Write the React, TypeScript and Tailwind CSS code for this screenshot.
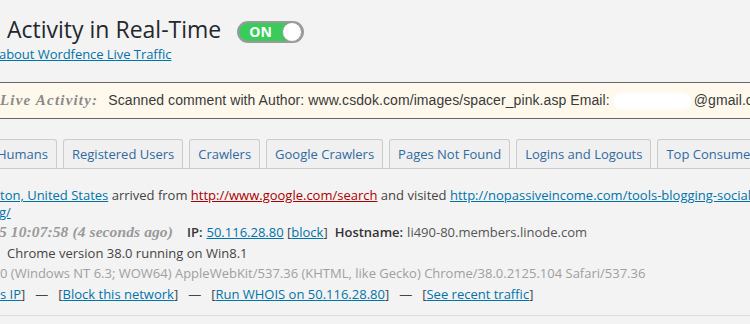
import React from "react";

const serif = "font-['Liberation_Serif',Georgia,serif] font-bold italic";

function Tab({ label, className = "" }: { label: string; className?: string }) {
  return (
    <div
      className={`h-[29px] px-2 border border-b-0 border-[#cccccc] rounded-t-[3px] bg-[#f0f0f0] text-[13px] leading-[28px] text-[#2f6aa1] whitespace-nowrap shrink-0 ${className}`}
    >
      {label}
    </div>
  );
}

function Lnk({ children, className = "" }: { children: React.ReactNode; className?: string }) {
  return <span className={`text-[#0073aa] underline ${className}`}>{children}</span>;
}

function Sep() {
  return <span className="mx-[10px]">—</span>;
}

export default function App() {
  return (
    <div className="w-[750px] h-[324px] overflow-hidden bg-[#f3f3f3] font-['Open_Sans',sans-serif] text-[13px] text-[#444444]">
      {/* Header */}
      <div className="flex items-start pt-[15px]">
        <div className="flex flex-col">
          <div className="pl-[7px] h-[29px] text-[23px] leading-[29px] text-[#23282d] whitespace-nowrap">
            Activity in Real-Time
          </div>
          <div className="mt-[1px] -ml-[1px] leading-[18px] text-[13px] whitespace-nowrap tracking-[-0.05px]">
            <Lnk>about Wordfence Live Traffic</Lnk>
          </div>
        </div>
        <div className="ml-[16px] mt-[6px] relative w-[67px] h-[22px] rounded-full border-2 border-[#9a9a9a] bg-[#3acb5a] flex items-center">
          <span className="pl-[10px] text-[14px] font-bold text-white leading-none">ON</span>
          <span className="absolute right-0 top-1/2 -translate-y-1/2 w-[20px] h-[20px] rounded-full bg-white border border-[#9a9a9a]"></span>
        </div>
      </div>

      {/* Live activity bar */}
      <div className="mt-[19px] h-[37px] border-y border-[#666666] bg-[#fef9ec] flex items-center whitespace-nowrap">
        <span className={`${serif} text-[15px] tracking-[1.2px] text-[#8a8a8a]`}>Live Activity:</span>
        <span className="ml-[10px] font-['Liberation_Sans',Arial,sans-serif] text-[14px] tracking-[0.08px] text-[#3a3a3a] flex items-center">
          Scanned comment with Author: www.csdok.com/images/spacer_pink.asp Email:
          <span className="inline-block w-[78px] h-[16px] mx-[3px] bg-white rounded-full blur-[1px]"></span>
          @gmail.com
        </span>
      </div>

      {/* Tabs */}
      <div className="mt-[20px] flex items-end gap-[6px] border-b border-[#cccccc] overflow-hidden">
        <Tab label="Humans" className="-ml-[12px]" />
        <Tab label="Registered Users" />
        <Tab label="Crawlers" />
        <Tab label="Google Crawlers" />
        <Tab label="Pages Not Found" />
        <Tab label="Logins and Logouts" />
        <Tab label="Top Consumers" />
      </div>

      {/* Entry */}
      <div className="border-b border-[#dddddd] pb-[11px]">
        <div className="mt-[18px] leading-[17px]">
          <div className="whitespace-nowrap">
            <Lnk>ton, United States</Lnk> arrived from{" "}
            <span className="text-[#aa0000] underline">http://www.google.com/search</span> and visited{" "}
            <Lnk>http://nopassiveincome.com/tools-blogging-social-media-marketing/</Lnk>
          </div>
          <div className="whitespace-nowrap">
            <Lnk className="-ml-[1px]">g/</Lnk>
          </div>
        </div>
        <div className="mt-[1px] leading-[20.5px] whitespace-nowrap flex items-baseline">
          <span className={`${serif} text-[15.5px] tracking-[0.1px] text-[#999999] -ml-[1px]`}>5 10:07:58 (4 seconds ago)</span>
          <span className="ml-[14px] font-semibold text-[#333]">IP:</span>
          <span className="ml-[4px]">
            <Lnk>50.116.28.80</Lnk> [<Lnk>block</Lnk>]
          </span>
          <span className="ml-[7px] font-semibold text-[#333]">Hostname:</span>
          <span className="ml-[4px] text-[#555]">li490-80.members.linode.com</span>
        </div>
        <div className="leading-[20.5px] whitespace-nowrap pl-[7px]">Chrome version 38.0 running on Win8.1</div>
        <div className="leading-[20.5px] whitespace-nowrap text-[#a0a0a0]">
          0 (Windows NT 6.3; WOW64) AppleWebKit/537.36 (KHTML, like Gecko) Chrome/38.0.2125.104 Safari/537.36
        </div>
        <div className="leading-[20.5px] whitespace-nowrap flex">
          <span>
            <Lnk>s IP</Lnk>]
          </span>
          <Sep />
          <span>
            [<Lnk>Block this network</Lnk>]
          </span>
          <Sep />
          <span>
            [<Lnk>Run WHOIS on 50.116.28.80</Lnk>]
          </span>
          <Sep />
          <span>
            [<Lnk>See recent traffic</Lnk>]
          </span>
        </div>
      </div>
    </div>
  );
}
